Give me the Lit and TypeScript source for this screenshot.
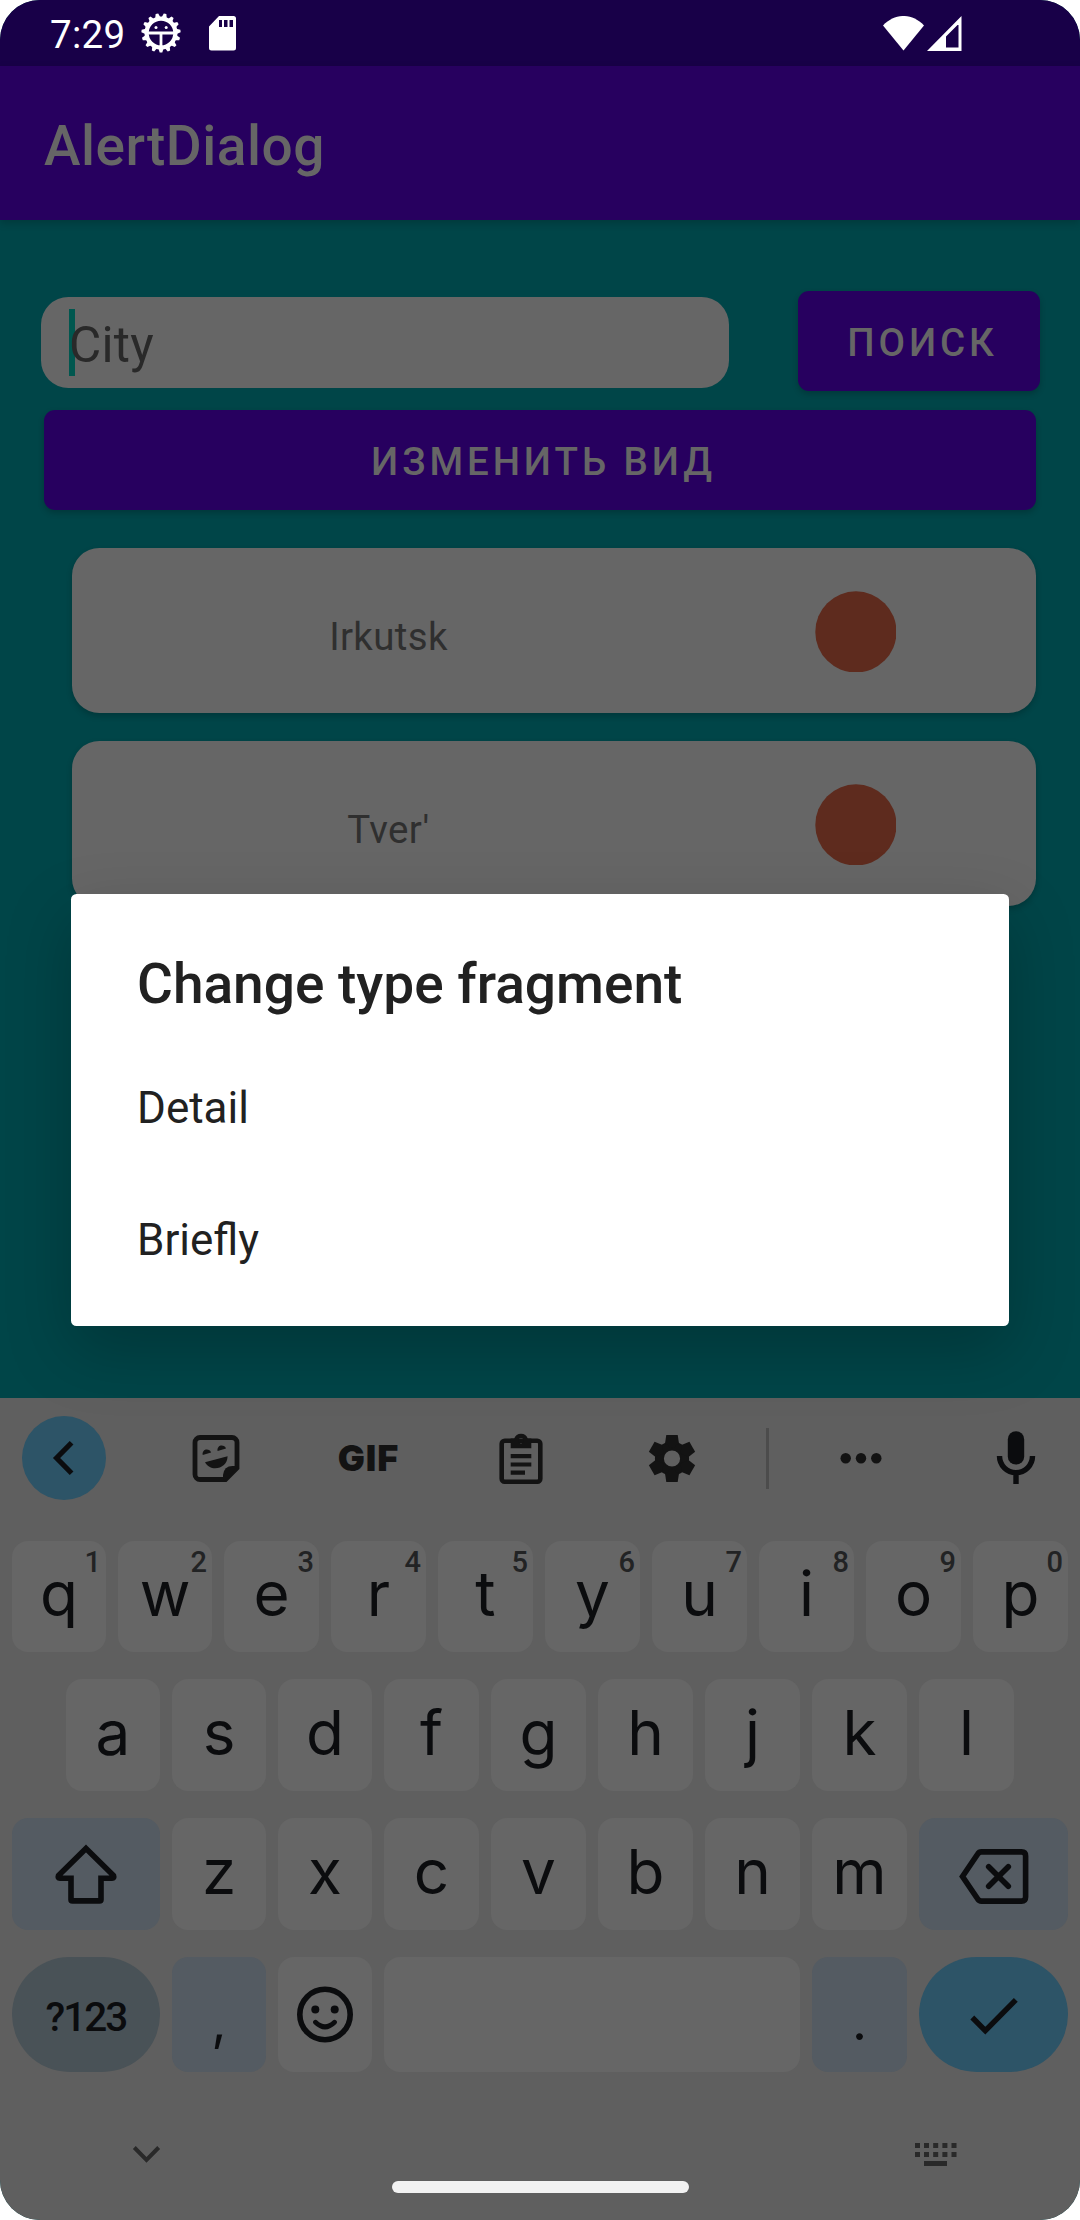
import { LitElement, html, css, svg, nothing } from "lit";
import { customElement, property } from "lit/decorators.js";

const spokes = (count: number) => Array.from({ length: count }, (_, i) => (360 / count) * i);

@customElement("status-bar")
class StatusBar extends LitElement {
  static styles = css`
    :host { display: flex; align-items: center; height: 66px; padding: 0 118px 0 50px; background: #180048; color: #fff; box-sizing: border-box; }
    .time { font-size: 38.5px; line-height: 46px; padding-top: 4px; width: 91px; letter-spacing: 0.3px; }
    .debug { width: 40px; height: 40px; }
    .sd { width: 27px; height: 35px; margin-left: 28px; }
    .fill { flex: 1; }
    .wifi { width: 41px; height: 35px; margin-right: 3px; }
    .signal { width: 35px; height: 35px; }
    svg { display: block; }
  `;
  render() {
    return html`
      <span class="time">7:29</span>
      <svg class="debug" viewBox="-20 -20 40 40">
        <circle r="14.4" fill="none" stroke="#fff" stroke-width="4.2" />
        ${spokes(15).map((a) => svg`<path d="M-2.6 15.5 L-1.3 19.6 L1.3 19.6 L2.6 15.5Z" fill="#fff" transform="rotate(${a})" />`)}
        <path d="M-13 0H13M0 0V13" stroke="#fff" stroke-width="2.8" />
        <circle cx="-5" cy="-5.6" r="1.5" fill="#fff" /><circle cx="5.2" cy="-5.6" r="1.5" fill="#fff" />
      </svg>
      <svg class="sd" viewBox="0 0 27 35">
        <path fill="#fff" fill-rule="evenodd" d="M10 0H24.5A2.5 2.5 0 0 1 27 2.5V32A2.5 2.5 0 0 1 24.5 34.5H2.5A2.5 2.5 0 0 1 0 32V10.5ZM10 4V11H13V4ZM15 4V11H18.5V4ZM20.5 4V11H24V4Z" />
      </svg>
      <span class="fill"></span>
      <svg class="wifi" viewBox="0 0 41 35"><path fill="#fff" d="M0 9.5C12 -3.2 29 -3.2 41 9.5L20.5 34.5Z" /></svg>
      <svg class="signal" viewBox="0 0 35 35"><path fill="#fff" fill-rule="evenodd" d="M34.5 0V35H0ZM19 20.5V31.5H31.5V9H30.5Z" /></svg>
    `;
  }
}

@customElement("city-card")
class CityCard extends LitElement {
  @property() name = "";
  static styles = css`
    :host { display: flex; align-items: flex-start; height: 165px; border-radius: 27.5px; background: #666; box-shadow: 0 3px 6px rgba(0, 0, 0, 0.2); box-sizing: border-box; }
    .name { width: 633px; text-align: center; font-size: 38.5px; line-height: 46px; padding-top: 66px; color: #2f2f2f; letter-spacing: 0.35px; }
    .dot { width: 81px; height: 81px; margin: 43px 0 0 110px; display: block; }
  `;
  render() {
    return html`<span class="name">${this.name}</span>
      <svg class="dot" viewBox="0 0 81 81"><circle cx="40.9" cy="40.9" r="40.6" fill="#5e2b1e" /></svg>`;
  }
}

@customElement("choice-dialog")
class ChoiceDialog extends LitElement {
  static styles = css`
    :host { display: block; background: #fff; border-radius: 5.5px; padding: 58px 66px 20px; color: #212121; box-sizing: border-box; box-shadow: 0 24px 66px rgba(0, 0, 0, 0.22); }
    .title { font-size: 55px; line-height: 64px; font-weight: 500; margin-bottom: 26px; white-space: nowrap; }
    .item { font-size: 44px; line-height: 132px; }
  `;
  render() {
    return html`<div class="title">Change type fragment</div>
      ${["Detail", "Briefly"].map((t) => html`<div class="item">${t}</div>`)}`;
  }
}

@customElement("soft-keyboard")
class SoftKeyboard extends LitElement {
  static styles = css`
    :host { display: flex; flex-direction: column; height: 822px; background: #5f5f5f; color: #0b0c0e; box-sizing: border-box; }
    svg { display: block; flex: none; }
    .icon { width: 60px; height: 60px; }
    .tools { display: grid; grid-template-columns: 128px 176px 128px 178px 124px 67px 120px 159px; height: 120px; margin-bottom: 23px; align-items: center; justify-items: center; color: #131313; }
    .back { width: 84px; height: 84px; border-radius: 42px; background: #2d5467; display: flex; align-items: center; justify-content: center; }
    .gif { font: 900 36px/60px Inter, sans-serif; letter-spacing: 1px; padding-left: 1px; }
    .rule { width: 3px; height: 61px; background: #4c4c4c; }
    .mic { margin-left: 31px; }
    .row { display: grid; column-gap: 12px; height: 112px; margin: 0 12px 27px; }
    .first { height: 111px; grid-template-columns: 94px 94px repeat(8, 95px); }
    .second { grid-template-columns: repeat(3, 94px) repeat(6, 95px); margin-left: 66px; }
    .third { grid-template-columns: 148px 94px 94px repeat(5, 95px) 149px; }
    .last { height: 115px; margin-bottom: 0; grid-template-columns: 148px 94px 94px 416px 95px 149px; }
    .key { position: relative; border-radius: 16px; background: #666; display: flex; align-items: center; justify-content: center; font: 400 62px/74px Inter, sans-serif; padding-bottom: 5px; box-sizing: border-box; }
    .hint { position: absolute; top: 6px; right: 5px; font: 500 29px/30px Roboto, sans-serif; color: #222324; }
    .plain { padding: 0; }
    .tonal { background: #545b62; }
    .punct { font-size: 52px; padding: 14px 0 0; }
    .mode { background: #495257; border-radius: 58px; font: 500 40.5px/50px Roboto, sans-serif; letter-spacing: -2px; padding: 4px 0 0; }
    .enter { background: #2d5467; border-radius: 58px; padding: 0; }
    .arrow { overflow: visible; }
    .nav { display: flex; align-items: flex-start; justify-content: space-between; padding: 70px 123px 0 132px; color: #292929; height: 109px; box-sizing: border-box; }
    .down { width: 29px; height: 24px; }
    .board { width: 42px; height: 24px; }
    .pill { width: 297px; height: 12px; border-radius: 6px; background: #f2f2f2; align-self: center; }
  `;

  private key(ch: string, hint = "") {
    return html`<div class="key">${ch}${hint ? html`<span class="hint">${hint}</span>` : nothing}</div>`;
  }

  render() {
    return html`
      <div class="tools">
        <div class="back"><svg class="icon" viewBox="-30 -30 60 60"><path d="M7.6 -15.3L-7.4 0L7.6 15.3" fill="none" stroke="#0b0c0e" stroke-width="5.2" /></svg></div>
        <svg class="icon" viewBox="-30 -30.5 60 60" fill="currentColor">
          <path d="M-16 -21H16A5 5 0 0 1 21 -16V9.5L9.5 21H-16A5 5 0 0 1 -21 16V-16A5 5 0 0 1 -16 -21Z" fill="none" stroke="currentColor" stroke-width="4.8" />
          <path d="M7 21V16.5Q8 7.5 16.5 7.5H22L9 22Z" />
          <path d="M-13.3 -3.5A4.3 4.3 0 0 1 -4.9 -5.9Z" /><path d="M1.6 -7.5A4.3 4.3 0 0 1 10 -9.9Z" />
          <path d="M-11 3.8L11.6 -2.2C11.5 5 6 9.8 -1 9.8C-5 9.8 -8.5 8 -11 3.8Z" />
        </svg>
        <span class="gif">GIF</span>
        <svg class="icon" viewBox="-30 -30.5 60 60" fill="currentColor">
          <rect x="-19.3" y="-17.8" width="38.6" height="41" rx="3" fill="none" stroke="currentColor" stroke-width="4.6" />
          <path fill-rule="evenodd" d="M-10.3 -20H-6.8A7.2 7.2 0 0 1 6.8 -20H10.3V-10.2H-10.3ZM0 -20.5A2.7 2.7 0 1 0 0.01 -20.5Z" />
          <path d="M-10.3 -2.3H10.3M-10.3 6H10.3M-10.3 14.2H4" stroke="currentColor" stroke-width="4.2" />
        </svg>
        <svg class="icon" viewBox="-30 -30.5 60 60" fill="currentColor">
          <circle r="12.6" fill="none" stroke="currentColor" stroke-width="9" />
          ${spokes(6).map((a) => svg`<path d="M-5.7 -23.4H5.7L7 -15L0 -10L-7 -15Z" transform="rotate(${a})" />`)}
        </svg>
        <span class="rule"></span>
        <svg class="icon" viewBox="-30 -30.3 60 60" fill="currentColor"><circle cx="-15.3" r="5.2" /><circle r="5.2" /><circle cx="15.3" r="5.2" /></svg>
        <svg class="icon mic" viewBox="-30 -30 60 60">
          <rect x="-8.2" y="-26.8" width="16.4" height="33.4" rx="8.2" fill="#0b0c0e" />
          <path d="M-16.5 -2A16.5 16.7 0 0 0 16.5 -2M0 15V26" fill="none" stroke="#0b0c0e" stroke-width="5.4" />
        </svg>
      </div>
      <div class="row first">${[..."qwertyuiop"].map((c, i) => this.key(c, String((i + 1) % 10)))}</div>
      <div class="row second">${[..."asdfghjkl"].map((c) => this.key(c))}</div>
      <div class="row third">
        <div class="key tonal plain"><svg class="icon arrow" viewBox="-30 -31.2 60 60"><path d="M0 -26.8L27.5 0.3Q28.5 3 26 3H15V24.5Q15 25.7 13.5 25.7H-13.5Q-15 25.7 -15 24.5V3H-26Q-28.5 3 -27.5 0.3Z" fill="none" stroke="currentColor" stroke-width="5.6" /></svg></div>
        ${[..."zxcvbnm"].map((c) => this.key(c))}
        <div class="key tonal plain"><svg width="72" height="60" viewBox="-37 -32.5 72 60"><path d="M-32.5 0L-17.3 -22.5Q-16 -24.6 -13.5 -24.6H26.5Q30.6 -24.6 30.6 -20.5V20.5Q30.6 24.6 26.5 24.6H-13.5Q-16 24.6 -17.3 22.5Z" fill="none" stroke="currentColor" stroke-width="5.6" /><path d="M-6 -9.8L13.6 9.8M13.6 -9.8L-6 9.8" transform="translate(-.3 0)" stroke="currentColor" stroke-width="5.6" stroke-linecap="round" /></svg></div>
      </div>
      <div class="row last">
        <div class="key mode">?123</div>
        <div class="key tonal punct">,</div>
        <div class="key plain"><svg class="icon" viewBox="-30 -29.5 60 60"><circle r="25.2" fill="none" stroke="currentColor" stroke-width="5.6" /><circle cx="-9.7" cy="-5" r="4" fill="currentColor" /><circle cx="9.7" cy="-5" r="4" fill="currentColor" /><path d="M-9.5 7.7Q0 17 9.5 7.7" fill="none" stroke="currentColor" stroke-width="4.8" stroke-linecap="round" /></svg></div>
        <div class="key"></div>
        <div class="key tonal punct">.</div>
        <div class="key enter"><svg class="icon" viewBox="-30 -30.5 60 60"><path d="M-21.7 2L-8.7 15.2L21.8 -15.7" fill="none" stroke="currentColor" stroke-width="5.4" /></svg></div>
      </div>
      <div class="nav">
        <svg class="down" viewBox="0 0 29 24"><path d="M2.3 5.5L14.5 18L26.7 5.5" fill="none" stroke="currentColor" stroke-width="4" /></svg>
        <svg class="board" viewBox="0 0 42 24" fill="currentColor">
          ${[1, 10].map((y) => [0, 9, 18.2, 27.4, 36.5].map((x) => svg`<rect x=${x} y=${y} width="5" height="5" />`))}
          <rect x="9" y="19" width="23" height="5" />
        </svg>
      </div>
      <div class="pill"></div>
    `;
  }
}

@customElement("app-root")
class AppRoot extends LitElement {
  static styles = css`
    :host { display: block; background: #fff; }
    .screen { position: relative; width: 1080px; height: 2220px; border-radius: 40px; overflow: hidden; display: flex; flex-direction: column; background: #004548; font-family: Roboto, sans-serif; }
    .appbar { height: 154px; padding: 6px 44px 0; box-sizing: border-box; background: #27005f; color: #666; font-size: 55px; line-height: 148px; font-weight: 500; letter-spacing: 0.55px; box-shadow: 0 3px 8px rgba(0, 0, 0, 0.18); }
    .content { flex: 1; padding: 71px 40px 0 41px; }
    .search { display: flex; align-items: center; justify-content: space-between; height: 100px; }
    .field { position: relative; width: 688px; height: 91px; margin-top: 3px; border-radius: 27.5px; background: #666; color: #292929; font-size: 49.5px; line-height: 91px; letter-spacing: 0.3px; padding: 3px 28px 0; box-sizing: border-box; }
    .caret { position: absolute; left: 28px; top: 12px; width: 6px; height: 67px; background: #00574f; }
    .hint { position: relative; }
    .button { height: 100px; border-radius: 11px; background: #27005f; color: #666; font-size: 38.5px; font-weight: 500; letter-spacing: 3.9px; line-height: 96px; padding: 4px 0 0 7px; box-sizing: border-box; text-align: center; box-shadow: 0 3px 6px rgba(0, 0, 0, 0.2); white-space: nowrap; }
    .button.small { width: 242px; }
    .button.full { margin: 19px 4px 38px 3px; }
    .cards { display: flex; flex-direction: column; gap: 28px; margin: 0 4px 0 31px; }
    .dialog { position: absolute; left: 71px; top: 894px; width: 938px; height: 432px; }
  `;
  render() {
    return html`
      <div class="screen">
        <status-bar></status-bar>
        <header class="appbar">AlertDialog</header>
        <main class="content">
          <div class="search">
            <div class="field"><span class="caret"></span><span class="hint">City</span></div>
            <div class="button small">ПОИСК</div>
          </div>
          <div class="button full">ИЗМЕНИТЬ ВИД</div>
          <div class="cards">
            <city-card name="Irkutsk"></city-card>
            <city-card name="Tver'"></city-card>
          </div>
        </main>
        <soft-keyboard></soft-keyboard>
        <choice-dialog class="dialog"></choice-dialog>
      </div>
    `;
  }
}
